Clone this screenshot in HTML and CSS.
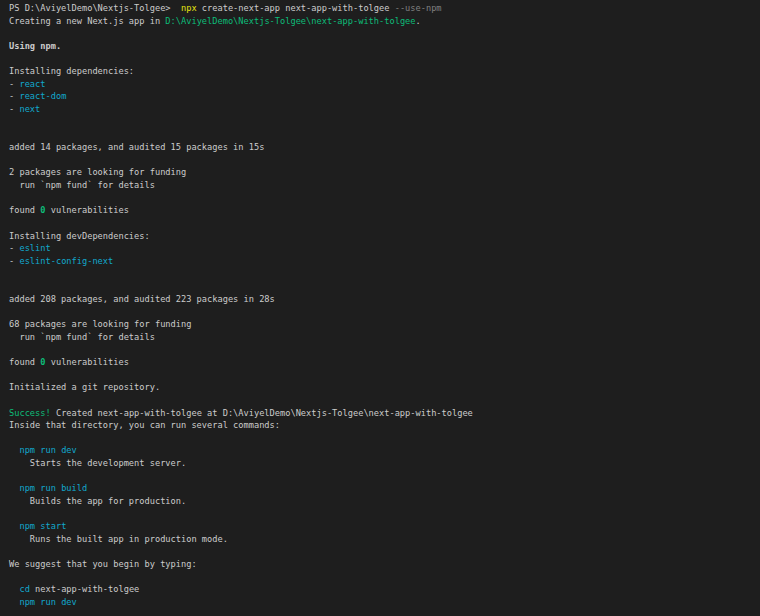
FILE: index.html
```html
<!DOCTYPE html>
<html>
<head>
<meta charset="utf-8">
<link rel="stylesheet" href="styles.css">
</head>
<body>
<pre class="term">PS D:\AviyelDemo\Nextjs-Tolgee&gt;  <span class="y">npx</span> create-next-app next-app-with-tolgee <span class="g">--use-npm</span>
Creating a new Next.js app in <span class="gr">D:\AviyelDemo\Nextjs-Tolgee\next-app-with-tolgee</span>.

<b class="b">Using npm.</b>

Installing dependencies:
- <span class="c">react</span>
- <span class="c">react-dom</span>
- <span class="c">next</span>


added 14 packages, and audited 15 packages in 15s

2 packages are looking for funding
  run `npm fund` for details

found <b class="gr b">0</b> vulnerabilities

Installing devDependencies:
- <span class="c">eslint</span>
- <span class="c">eslint-config-next</span>


added 208 packages, and audited 223 packages in 28s

68 packages are looking for funding
  run `npm fund` for details

found <b class="gr b">0</b> vulnerabilities

Initialized a git repository.

<span class="gr">Success!</span> Created next-app-with-tolgee at D:\AviyelDemo\Nextjs-Tolgee\next-app-with-tolgee
Inside that directory, you can run several commands:

  <span class="c">npm run dev</span>
    Starts the development server.

  <span class="c">npm run build</span>
    Builds the app for production.

  <span class="c">npm start</span>
    Runs the built app in production mode.

We suggest that you begin by typing:

  <span class="c">cd</span> next-app-with-tolgee
  <span class="c">npm run dev</span>
</pre>
</body>
</html>
```
FILE: styles.css
```css
html, body {
  margin: 0;
  padding: 0;
  background: #1e1e1e;
  height: 100%;
  overflow: hidden;
}
.term {
  margin: 0;
  padding: 2px 0 0 9px;
  font-family: "DejaVu Sans Mono", "Liberation Mono", monospace;
  font-size: 8.66px;
  line-height: 12.64px;
  color: #cccccc;
  white-space: pre;
}
.b { font-weight: bold; }
.y { color: #e5e510; }
.g { color: #808080; }
.gr { color: #0dbc79; }
.c { color: #11a8cd; }
```
